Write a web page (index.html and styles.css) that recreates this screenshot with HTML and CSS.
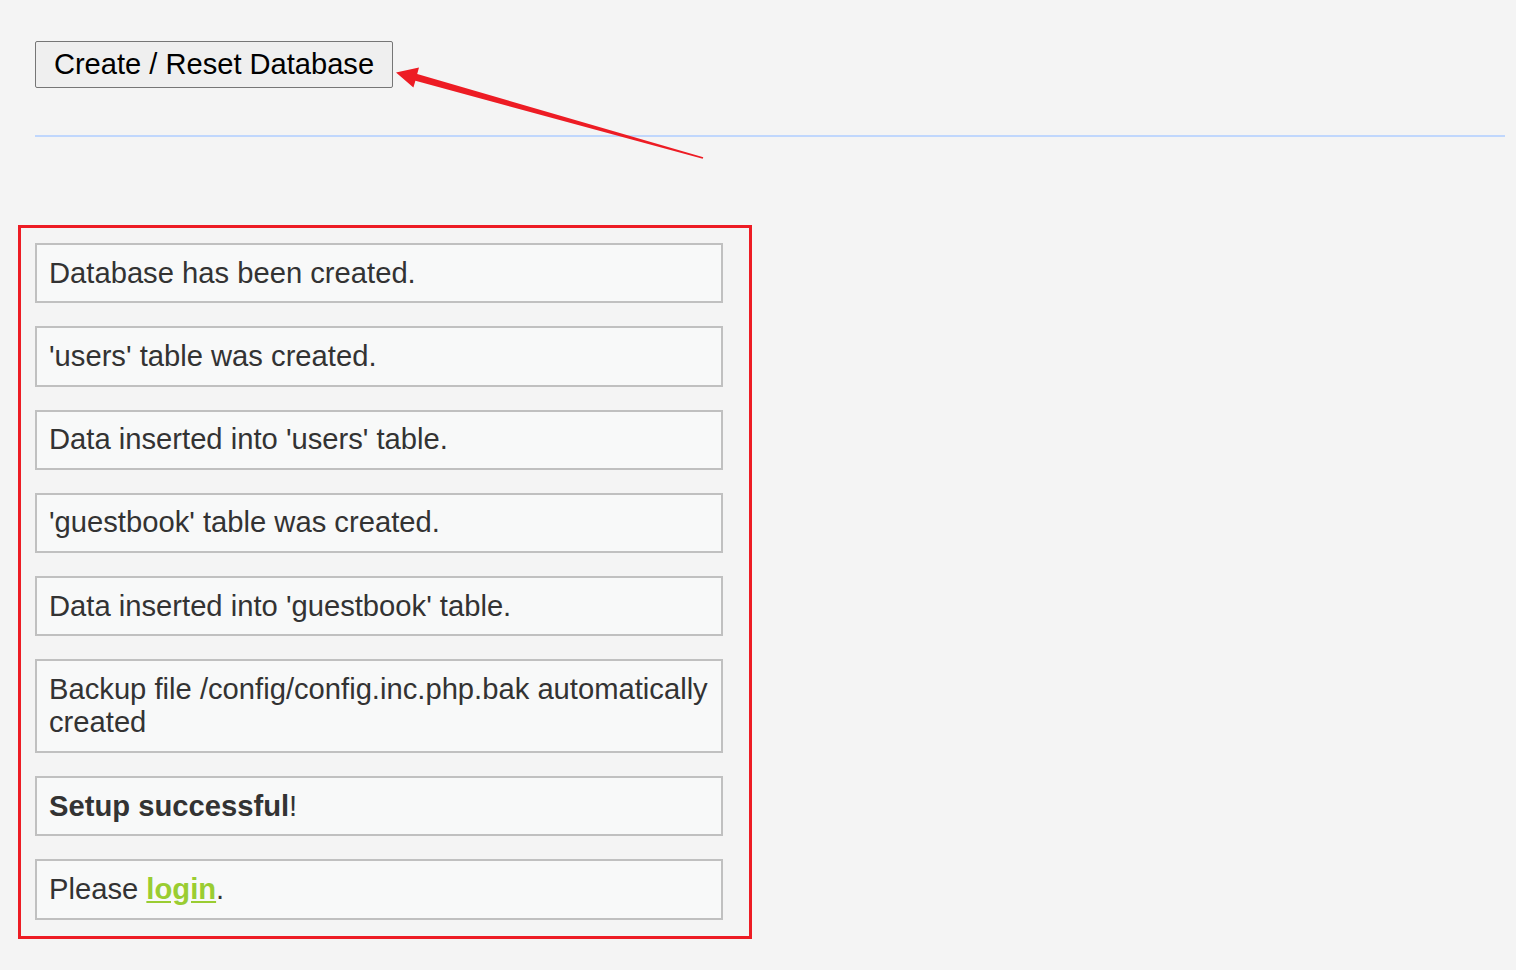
FILE: index.html
```html
<!DOCTYPE html>
<html>
<head>
<meta charset="utf-8">
<link rel="stylesheet" href="styles.css">
</head>
<body>
<div class="page">
  <form class="setup-form">
    <button type="button" class="btn">Create / Reset Database</button>
  </form>
  <div class="rule"></div>
  <div class="messages">
    <div class="message">Database has been created.</div>
    <div class="message">'users' table was created.</div>
    <div class="message">Data inserted into 'users' table.</div>
    <div class="message">'guestbook' table was created.</div>
    <div class="message">Data inserted into 'guestbook' table.</div>
    <div class="message">Backup file /config/config.inc.php.bak automatically created</div>
    <div class="message"><strong>Setup successful</strong>!</div>
    <div class="message">Please <a class="login" href="#">login</a>.</div>
  </div>
</div>
<div class="annot-box"></div>
<svg class="annot-arrow" width="760" height="200" viewBox="0 0 760 200">
  <polygon fill="#ed1c24" points="396,72.5 419,67.6 417.2,74 703.3,157.2 702.7,158.8 415.4,80.8 413.4,87.6"/>
</svg>
</body>
</html>
```
FILE: styles.css
```css
html, body {
  margin: 0;
  padding: 0;
  background: #f4f4f4;
}
body {
  font-family: "Liberation Sans", Arial, sans-serif;
  color: #333333;
  position: relative;
  min-height: 970px;
}
.page {
  padding: 41px 11px 0 35px;
}
.setup-form {
  margin: 0;
}
.btn {
  font-family: "Liberation Sans", Arial, sans-serif;
  font-size: 29.1px;
  line-height: 33px;
  color: #000;
  background: #efefef;
  border: 1px solid #767676;
  border-radius: 2px;
  padding: 6px 0;
  height: 47px;
  width: 358px;
  margin: 0;
  cursor: pointer;
  display: block;
  white-space: nowrap;
  text-align: center;
}
.rule {
  margin-top: 47px;
  height: 2px;
  background: #c0d7fd;
}
.messages {
  margin-top: 106px;
  width: 688px;
  display: flex;
  flex-direction: column;
  gap: 23px;
}
.message {
  border: 2px solid #c0c0c0;
  background: #f8f9f9;
  font-size: 29.2px;
  line-height: 33.3px;
  padding: 11.5px 4px 11.5px 12px;
}
.message strong {
  font-weight: bold;
}
.login {
  color: #9acd32;
  font-weight: bold;
  text-decoration: underline;
}
.annot-box {
  position: absolute;
  left: 18px;
  top: 225px;
  width: 728px;
  height: 708px;
  border: 3px solid #ed1c24;
  pointer-events: none;
}
.annot-arrow {
  position: absolute;
  left: 0;
  top: 0;
  pointer-events: none;
}
```
